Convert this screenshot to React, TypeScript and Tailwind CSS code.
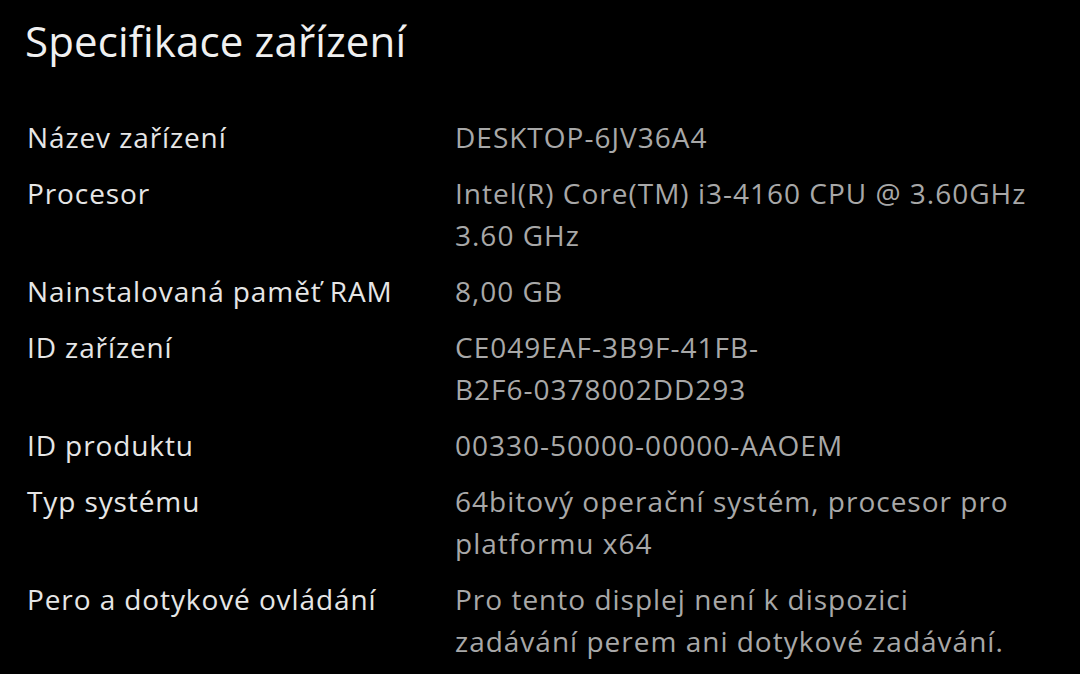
import React from "react";

const rows: { label: string; value: string[] }[] = [
  { label: "Název zařízení", value: ["DESKTOP-6JV36A4"] },
  { label: "Procesor", value: ["Intel(R) Core(TM) i3-4160 CPU @ 3.60GHz", "3.60 GHz"] },
  { label: "Nainstalovaná paměť RAM", value: ["8,00 GB"] },
  { label: "ID zařízení", value: ["CE049EAF-3B9F-41FB-", "B2F6-0378002DD293"] },
  { label: "ID produktu", value: ["00330-50000-00000-AAOEM"] },
  { label: "Typ systému", value: ["64bitový operační systém, procesor pro", "platformu x64"] },
  { label: "Pero a dotykové ovládání", value: ["Pro tento displej není k dispozici", "zadávání perem ani dotykové zadávání."] },
];

export default function App() {
  return (
    <div
      className="w-[1080px] h-[674px] bg-black overflow-hidden pl-[27px] pt-[13px]"
      style={{ fontFamily: '"Open Sans", "Noto Sans", sans-serif' }}
    >
      <h1 className="text-[42px] leading-[56px] text-[#f0f0f0] -ml-[2px] tracking-[0.15px]">Specifikace zařízení</h1>
      <div className="mt-[47px] flex flex-col gap-[14px]">
        {rows.map((r) => (
          <div key={r.label} className="flex text-[28px] leading-[42px]">
            <div className="w-[428px] shrink-0 text-[#e6e6e6] tracking-[0.9px]">{r.label}</div>
            <div className="text-[#a8a8a8] tracking-[1px]">
              {r.value.map((v) => (
                <div key={v} className="whitespace-nowrap">{v}</div>
              ))}
            </div>
          </div>
        ))}
      </div>
    </div>
  );
}
